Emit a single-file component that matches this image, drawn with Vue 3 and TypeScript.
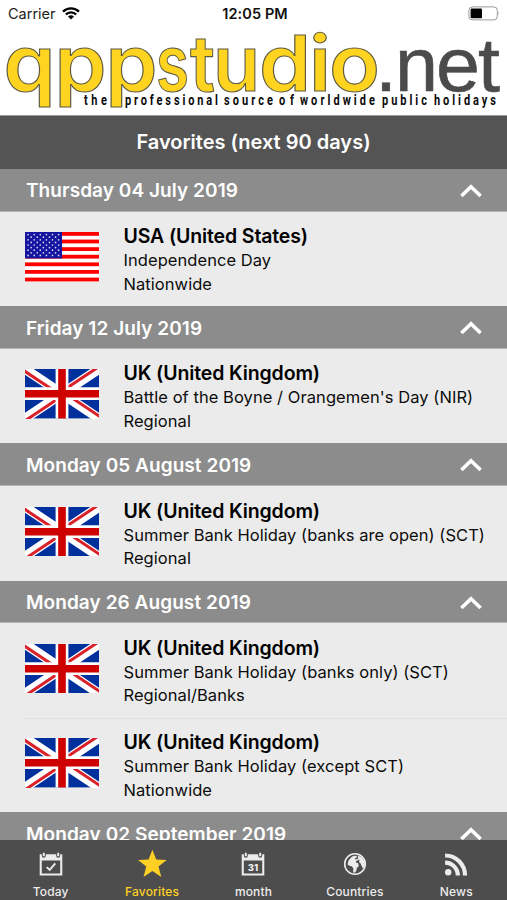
<script setup lang="ts">
interface Holiday {
  country: string
  flag: 'us' | 'uk'
  name: string
  scope: string
}
interface Day {
  date: string
  holidays: Holiday[]
}
interface Glyph {
  ch: string
  x: number
  w: number
}
interface Word {
  text: string
  x: number
  w: number
}

const usa = 'USA (United States)'
const uk = 'UK (United Kingdom)'

const days: Day[] = [
  { date: 'Thursday 04 July 2019', holidays: [{ country: usa, flag: 'us', name: 'Independence Day', scope: 'Nationwide' }] },
  { date: 'Friday 12 July 2019', holidays: [{ country: uk, flag: 'uk', name: "Battle of the Boyne / Orangemen's Day (NIR)", scope: 'Regional' }] },
  { date: 'Monday 05 August 2019', holidays: [{ country: uk, flag: 'uk', name: 'Summer Bank Holiday (banks are open) (SCT)', scope: 'Regional' }] },
  {
    date: 'Monday 26 August 2019',
    holidays: [
      { country: uk, flag: 'uk', name: 'Summer Bank Holiday (banks only) (SCT)', scope: 'Regional/Banks' },
      { country: uk, flag: 'uk', name: 'Summer Bank Holiday (except SCT)', scope: 'Nationwide' },
    ],
  },
  { date: 'Monday 02 September 2019', holidays: [] },
]

const brand: Glyph[] = [
  { ch: 'q', x: 3.5, w: 52 },
  { ch: 'p', x: 54.5, w: 52 },
  { ch: 'p', x: 105.5, w: 52 },
  { ch: 's', x: 156, w: 33 },
  { ch: 't', x: 190, w: 25 },
  { ch: 'u', x: 213, w: 47 },
  { ch: 'd', x: 259, w: 52 },
  { ch: 'i', x: 309, w: 22 },
  { ch: 'o', x: 329, w: 51 },
]
const suffix: Glyph[] = [
  { ch: '.', x: 375, w: 22 },
  { ch: 'n', x: 395, w: 43 },
  { ch: 'e', x: 436, w: 44 },
  { ch: 't', x: 478, w: 22 },
]
const tagline: Word[] = [
  { text: 'the', x: 84, w: 23 },
  { text: 'professional', x: 125, w: 93 },
  { text: 'source', x: 224, w: 49 },
  { text: 'of', x: 279, w: 15 },
  { text: 'worldwide', x: 300, w: 75 },
  { text: 'public', x: 382, w: 45 },
  { text: 'holidays', x: 434, w: 62 },
]

const stars: { x: number; y: number }[] = []
for (let r = 0; r < 9; r++) {
  for (let c = 0; c < (r % 2 ? 5 : 6); c++) {
    stars.push({ x: 3.1 + c * 6.1 + (r % 2 ? 3.05 : 0), y: 2.6 + r * 2.6 })
  }
}

const tabs = ['Today', 'Favorites', 'month', 'Countries', 'News']
</script>

<template>
  <div class="screen">
    <header class="status">
      <div class="carrier">
        <span>Carrier</span>
        <svg class="wifi" viewBox="0 0 18 13">
          <path d="M1 4.6a11.3 11.3 0 0 1 16 0" />
          <path d="M3.8 7.5a7.3 7.3 0 0 1 10.4 0" />
          <path class="dot" d="M9 12.6 6 9.6a4.3 4.3 0 0 1 6 0z" />
        </svg>
      </div>
      <span class="time">12:05 PM</span>
      <svg class="battery" viewBox="0 0 33 15">
        <rect x=".9" y=".9" width="28.4" height="13" rx="3.5" fill="#fff" stroke="#999" />
        <rect x="2.6" y="2.6" width="11.4" height="9.6" rx="1" fill="#000" />
        <path d="M30.6 5.2q1.5 2.2 0 4.4z" fill="#888" />
      </svg>
    </header>

    <svg class="logo" viewBox="0 27 507 88">
      <g class="brand">
        <text v-for="(g, i) in brand" :key="i" :x="g.x" y="91" :textLength="g.w" lengthAdjust="spacingAndGlyphs">{{ g.ch }}</text>
      </g>
      <g class="suffix">
        <text v-for="g in suffix" :key="g.ch" :x="g.x" y="91" :textLength="g.w" lengthAdjust="spacingAndGlyphs">{{ g.ch }}</text>
      </g>
      <g class="tagline">
        <text v-for="t in tagline" :key="t.text" :transform="`translate(${t.x} 105) scale(.76 1)`" :textLength="t.w / 0.76">{{ t.text }}</text>
      </g>
    </svg>

    <h1 class="title">Favorites (next 90 days)</h1>

    <main class="list">
      <section v-for="day in days" :key="day.date">
        <h2 class="day">
          <span>{{ day.date }}</span>
          <svg class="chevron" viewBox="0 0 22 14"><path d="M1.4 12 11 2.8 20.6 12" /></svg>
        </h2>
        <article v-for="h in day.holidays" :key="h.name" class="row">
          <svg v-if="h.flag === 'us'" class="flag" viewBox="0 0 74 49.4">
            <rect width="74" height="49.4" fill="#fff" />
            <rect v-for="n in 7" :key="n" y="0" width="74" height="3.8" fill="#fe0000" :transform="`translate(0 ${(n - 1) * 7.6})`" />
            <rect width="37" height="26.4" fill="#1515a0" />
            <circle v-for="(s, i) in stars" :key="i" :cx="s.x" :cy="s.y" r=".85" fill="#d5d5f4" />
          </svg>
          <svg v-else class="flag" viewBox="0 0 74 49.4">
            <rect width="74" height="49.4" fill="#00309c" />
            <path d="M0 0 74 49.4M74 0 0 49.4" stroke="#fff" stroke-width="9.6" />
            <path d="M-1.2 1.6 35.8 26.3M38.2 23.1 75.2 47.8M72.8-1.6 35.8 23.1M38.2 26.3 1.2 51" stroke="#da2028" stroke-width="3" />
            <path d="M37 0v49.4M0 24.7h74" stroke="#fff" stroke-width="12.8" />
            <path d="M37 0v49.4M0 24.7h74" stroke="#ce0000" stroke-width="7.6" />
          </svg>
          <div class="info">
            <h3>{{ h.country }}</h3>
            <p>{{ h.name }}</p>
            <p>{{ h.scope }}</p>
          </div>
        </article>
      </section>
    </main>

    <nav class="tabs">
      <a v-for="t in tabs" :key="t" class="tab" :class="{ active: t === 'Favorites' }">
        <svg class="icon" viewBox="0 0 30 30">
          <template v-if="t === 'Today' || t === 'month'">
            <path fill-rule="evenodd" d="M3.7 5.2h2.1v1.6a2 2 0 0 0 4 0V5.2h10.4v1.6a2 2 0 0 0 4 0V5.2h2.1v21.4H3.7zM5.8 11.4v13.1h18.4V11.4z" />
            <path d="M6.8 3.8h2v3.4h-2zM21.2 3.8h2v3.4h-2z" />
            <path v-if="t === 'Today'" d="m10.7 18.1 3 2.8 5.6-6.6" fill="none" stroke="currentColor" stroke-width="1.9" />
            <text v-else class="num" x="15" y="21.7" text-anchor="middle">31</text>
          </template>
          <path v-else-if="t === 'Favorites'" d="m15.4 .8 3.8 9.7 10.5.5-8.2 6.6 2.8 10.3-8.9-5.8-8.9 5.8 2.8-10.3L1.1 11l10.5-.5z" />
          <template v-else-if="t === 'Countries'">
            <circle cx="15" cy="15" r="10.3" fill="none" stroke="currentColor" stroke-width="1.6" />
            <path d="M7.5 15.2 8.8 11l3.4-3.4 2.6-.8 2.2.3-.8 1.8-1.5.4.8 1.2 2.5-.7 1.3 1.3-2.6.5-1 1.6 2.6 1.3.5 2.4-1.9 2.1-.7 3-1.5 1.8-1.5-.3.1-4.2-1.6-2.1-2.4-.4z" />
            <path d="m17.3 6.2 4.4 2 2.8 4.1.3 4-1.8 3.5-1.1-2.4-1.3-2.8-1.6-1.5.6-2.1-1.8-1.5.4-1.6z" />
          </template>
          <template v-else>
            <circle cx="7.2" cy="23.2" r="3.2" />
            <path d="M4.1 13.6a12.7 12.7 0 0 1 12.7 12.8M4.1 6.5a19.9 19.9 0 0 1 19.9 19.9" fill="none" stroke="currentColor" stroke-width="4.2" />
          </template>
        </svg>
        <span>{{ t }}</span>
      </a>
    </nav>
  </div>
</template>

<style>
body {
  margin: 0;
  background: #fff;
}
</style>

<style scoped>
.screen {
  width: 507px;
  height: 900px;
  display: flex;
  flex-direction: column;
  overflow: hidden;
  font-family: Inter, 'Liberation Sans', sans-serif;
  color: #0c0c0c;
}
.status {
  height: 27px;
  flex: none;
  display: grid;
  grid-template-columns: 1fr auto 1fr;
  align-items: center;
  padding: 0 6px 0 8px;
  box-sizing: border-box;
  font-size: 14.5px;
  color: #222;
}
.carrier {
  display: flex;
  align-items: center;
  gap: 6px;
}
.wifi {
  width: 18px;
  height: 13px;
  fill: none;
  stroke: #000;
  stroke-width: 2.3;
}
.wifi .dot {
  fill: #000;
  stroke: none;
}
.time {
  font-weight: 600;
  padding-left: 1px;
  letter-spacing: 0.1px;
  color: #111;
}
.battery {
  width: 33px;
  height: 15px;
  justify-self: end;
}
.logo {
  width: 507px;
  height: 88px;
  flex: none;
  display: block;
}
.brand {
  font-size: 77px;
  font-weight: 600;
  fill: #ffd420;
  stroke: #5f5b42;
  stroke-width: 1.1;
}
.suffix {
  font-family: 'Liberation Sans', sans-serif;
  font-size: 76px;
  fill: #4b4b4b;
  stroke: #4b4b4b;
  stroke-width: 0.6;
}
.tagline {
  font-family: Roboto, 'Liberation Sans', sans-serif;
  font-size: 14.5px;
  font-weight: 700;
  fill: #0a0a0a;
}
.title {
  height: 54px;
  flex: none;
  box-sizing: border-box;
  margin: 0;
  border-top: 1px solid #999d9c;
  background: #545454;
  color: #fff;
  font-size: 20px;
  font-weight: 600;
  line-height: 53px;
  text-align: center;
}
.list {
  flex: 1;
  min-height: 0;
  overflow: hidden;
  background: #ebebeb;
}
.day {
  height: 42.8px;
  box-sizing: border-box;
  margin: 0;
  padding: 2.2px 25px 0 26px;
  display: flex;
  align-items: center;
  justify-content: space-between;
  background: #8c8c8c;
  border-bottom: 1px solid #b4b4b4;
  color: #fff;
  font-size: 19px;
  font-weight: 600;
  letter-spacing: 0.07px;
}
.chevron {
  width: 22px;
  height: 14px;
  fill: none;
  stroke: #fff;
  stroke-width: 3.6;
}
.row {
  height: 94.4px;
  box-sizing: border-box;
  display: flex;
  align-items: flex-start;
  gap: 24.5px;
  margin-left: 25px;
  padding-top: 12.5px;
}
.row + .row {
  border-top: 1px solid #e0e0e0;
  padding-top: 11.7px;
}
.flag {
  width: 74px;
  height: 49.4px;
  margin-top: 8px;
  flex: none;
}
.info h3,
.info p {
  margin: 0;
  white-space: nowrap;
}
.info h3 {
  font-size: 19.5px;
  font-weight: 600;
  letter-spacing: -0.13px;
  line-height: 25px;
  color: #000;
}
.info p {
  font-size: 16.5px;
  letter-spacing: 0.06px;
  line-height: 23.4px;
}
.tabs {
  height: 60px;
  flex: none;
  display: grid;
  grid-template-columns: repeat(5, 1fr);
  background: #4d4d4d;
  color: #fff;
}
.tab {
  display: flex;
  flex-direction: column;
  align-items: center;
  padding-top: 9px;
  font-size: 12px;
  font-weight: 500;
  letter-spacing: 0.15px;
  line-height: 15px;
  color: #ececec;
}
.tab.active {
  color: #ffd024;
}
.icon {
  width: 30px;
  height: 30px;
  margin-bottom: 5px;
  fill: currentColor;
}
.num {
  font-size: 9.5px;
  font-weight: 800;
  letter-spacing: 0;
}
</style>
